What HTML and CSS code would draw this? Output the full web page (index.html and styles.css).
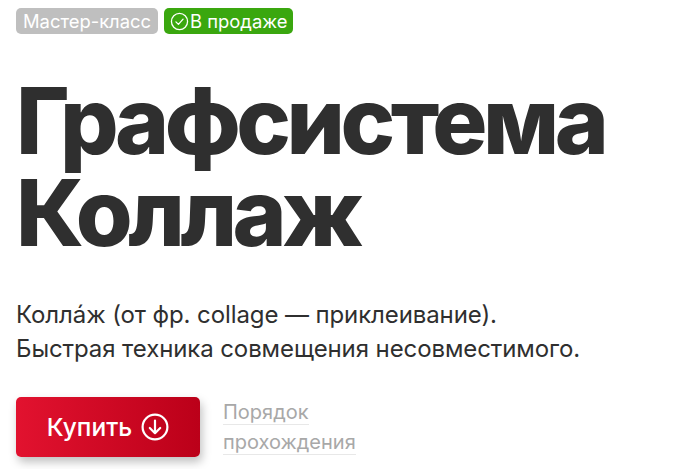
FILE: index.html
```html
<!DOCTYPE html>
<html lang="ru">
<head>
  <meta charset="UTF-8" />
  <title>Графсистема Коллаж</title>
  <link rel="stylesheet" href="styles.css">
</head>
<body>
  <div class="tags">
    <span class="tag tag-gray">Мастер-класс</span>
    <span class="tag tag-green">
      <svg class="tag-icon" viewBox="0 0 16 16" fill="none" stroke="currentColor" stroke-width="1.1">
        <circle cx="8" cy="8" r="6.8"/>
        <path d="M5 8.3l2.1 2.1L11 6" stroke-linecap="round" stroke-linejoin="round"/>
      </svg>В продаже
    </span>
  </div>

  <h1>Графсистема<br>Коллаж</h1>

  <p class="lead">Колла́ж (от фр. collage — приклеивание).<br>Быстрая техника совмещения несовместимого.</p>

  <div class="actions">
    <button class="buy">Купить
      <svg class="buy-icon" viewBox="0 0 28 28" fill="none" stroke="currentColor" stroke-width="2.2">
        <circle cx="14" cy="14" r="12.4"/>
        <path d="M14 7.5v12.5M8.8 15l5.2 5.2 5.2-5.2" stroke-linecap="round" stroke-linejoin="round"/>
      </svg>
    </button>
    <a class="order" href="#"><span>Порядок</span><br><span>прохождения</span></a>
  </div>
</body>
</html>
```

FILE: styles.css
```css
body {
  margin: 0;
  padding: 8px 16px 0;
  height: 469px;
  box-sizing: border-box;
  overflow: hidden;
  background-color: #fff;
  font-family: 'Inter', 'Liberation Sans', sans-serif;
  color: #2f2f2f;
}

.tags {
  display: flex;
  gap: 6px;
}

.tag {
  display: flex;
  align-items: center;
  height: 26px;
  padding: 0 7px;
  border-radius: 5px;
  font-size: 18.4px;
  color: #fff;
  box-sizing: border-box;
}

.tag-gray {
  background-color: #bfbfbf;
}

.tag-green {
  background-color: #3aa70f;
  padding: 0 6px;
}

.tag-icon {
  width: 19px;
  height: 19px;
  margin-right: 1px;
}

h1 {
  margin: 41px 0 0;
  font-size: 92px;
  line-height: 92px;
  font-weight: 800;
  letter-spacing: -4.5px;
  color: #2f2f2f;
}

.lead {
  margin: 39px 0 0;
  font-size: 24px;
  line-height: 34px;
  letter-spacing: -0.1px;
}

.actions {
  display: flex;
  align-items: flex-start;
  gap: 23px;
  margin-top: 31px;
}

.buy {
  display: flex;
  align-items: center;
  justify-content: center;
  gap: 9px;
  width: 184px;
  height: 60px;
  border: none;
  border-radius: 5px;
  background: linear-gradient(90deg, #e2122f, #bb0019);
  box-shadow: 2px 5px 10px rgba(0, 0, 0, 0.25);
  color: #fff;
  font-family: inherit;
  font-size: 24.5px;
  font-weight: 500;
}

.buy-icon {
  width: 28px;
  height: 28px;
}

.order {
  font-size: 20px;
  line-height: 30px;
  color: #a8a8a8;
  text-decoration: none;
}

.order span {
  border-bottom: 1px solid #e8e8e8;
}
```
